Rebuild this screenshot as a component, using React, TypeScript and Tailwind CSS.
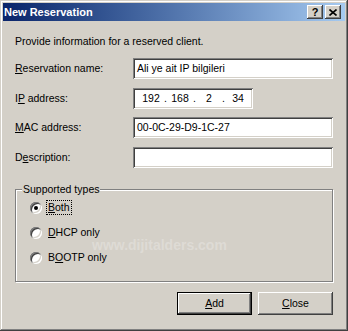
import type { ReactNode } from 'react';

const sunken =
  'bg-white shadow-[inset_1px_1px_0_#808080,inset_-1px_-1px_0_#ffffff,inset_2px_2px_0_#404040,inset_-2px_-2px_0_#d4d0c8]';
const raised =
  'bg-[#d4d0c8] shadow-[inset_-1px_-1px_0_#404040,inset_1px_1px_0_#ffffff,inset_-2px_-2px_0_#808080,inset_2px_2px_0_#d4d0c8]';

const TitleButton = ({ children, className = '' }: { children: ReactNode; className?: string }) => (
  <div className={`w-[16px] h-[14px] flex items-center justify-center ${raised} ${className}`}>
    {children}
  </div>
);

const Row = ({ label, children }: { label: ReactNode; children: ReactNode }) => (
  <div className="grid grid-cols-[118px_200px] items-center h-[21px]">
    <span className="leading-[13px]">{label}</span>
    {children}
  </div>
);

const Radio = ({ checked, children }: { checked?: boolean; children: ReactNode }) => (
  <div className="flex items-center h-[13px] gap-[5px]">
    <div className="w-[12px] h-[12px] rounded-full flex items-center justify-center bg-white shadow-[inset_1px_1px_0_#808080,inset_-1px_-1px_0_#ffffff,inset_2px_2px_0_#404040,inset_-2px_-2px_0_#d4d0c8]">
      {checked && <div className="w-[4px] h-[4px] rounded-full bg-black" />}
    </div>
    {children}
  </div>
);

export default function App() {
  return (
    <div className="relative w-[348px] h-[331px] overflow-hidden bg-[#d4d0c8] p-[3px] text-[10.5px] text-black font-['Liberation_Sans',Arial,sans-serif] shadow-[inset_-1px_-1px_0_#404040,inset_1px_1px_0_#d4d0c8,inset_-2px_-2px_0_#808080,inset_2px_2px_0_#ffffff]">
      {/* title bar */}
      <div className="h-[18px] flex items-center bg-linear-to-r from-[#0a246a] to-[#a6caf0] pl-[1px] pr-[4px]">
        <span className="flex-1 font-bold text-[11px] text-white leading-[13px]">New Reservation</span>
        <TitleButton>
          <span className="font-bold text-[11px] leading-none">?</span>
        </TitleButton>
        <TitleButton className="ml-[2px]">
          <svg width="8" height="7" viewBox="0 0 8 7">
            <path d="M0.5 0.5 L7.5 6.5 M7.5 0.5 L0.5 6.5" stroke="#000" strokeWidth="1.6" />
          </svg>
        </TitleButton>
      </div>

      <div className="pl-[12px] pr-[12px]">
        <p className="mt-[14px] leading-[13px]">Provide information for a reserved client.</p>

        <div className="mt-[10px] flex flex-col">
          <Row label={<><u>R</u>eservation name:</>}>
            <div className={`${sunken} h-[21px] pl-[4px] flex items-center leading-[13px]`}>Ali ye ait IP bilgileri</div>
          </Row>
          <div className="mt-[9px]">
            <Row label={<>I<u>P</u> address:</>}>
              <div className={`${sunken} w-[120px] h-[21px] pl-[6px] flex items-center leading-[13px]`}>
                <span className="w-[24px] text-center">192</span>
                <span className="w-[5px] text-center">.</span>
                <span className="w-[24px] text-center">168</span>
                <span className="w-[5px] text-center">.</span>
                <span className="w-[24px] text-center">2</span>
                <span className="w-[5px] text-center">.</span>
                <span className="w-[24px] text-center">34</span>
              </div>
            </Row>
          </div>
          <div className="mt-[8px]">
            <Row label={<><u>M</u>AC address:</>}>
              <div className={`${sunken} h-[21px] pl-[4px] flex items-center leading-[13px]`}>00-0C-29-D9-1C-27</div>
            </Row>
          </div>
          <div className="mt-[9px]">
            <Row label={<>D<u>e</u>scription:</>}>
              <div className={`${sunken} h-[21px]`} />
            </Row>
          </div>
        </div>

        <fieldset className="mt-[15px] border border-[#808080] p-0 pb-[17px] shadow-[inset_1px_1px_0_#ffffff,1px_1px_0_#ffffff]">
          <legend className="ml-[6px] px-[1px] leading-[13px] bg-[#d4d0c8]">Supported types</legend>
          <div className="ml-[14px] mt-[5px] flex flex-col gap-[12px]">
            <Radio checked>
              <span className="leading-[13px] outline-1 outline-dotted outline-black outline-offset-0 px-[1px]">
                <u>B</u>oth
              </span>
            </Radio>
            <Radio>
              <span className="leading-[13px] px-[1px]">
                <u>D</u>HCP only
              </span>
            </Radio>
            <Radio>
              <span className="leading-[13px] px-[1px]">
                B<u>O</u>OTP only
              </span>
            </Radio>
          </div>
        </fieldset>

        <div className="mt-[10px] flex justify-end gap-[6px]">
          <div className="w-[75px] h-[23px] border border-black">
            <div className={`${raised} w-full h-full flex items-center justify-center leading-[13px]`}>
              <span>
                <u>A</u>dd
              </span>
            </div>
          </div>
          <div className={`${raised} w-[75px] h-[23px] flex items-center justify-center leading-[13px]`}>
            <span>
              <u>C</u>lose
            </span>
          </div>
        </div>
      </div>

      {/* faint watermark over the group box */}
      <span className="absolute left-[92px] top-[235px] text-[14px] font-bold text-white/25 pointer-events-none">
        www.dijitalders.com
      </span>
    </div>
  );
}
